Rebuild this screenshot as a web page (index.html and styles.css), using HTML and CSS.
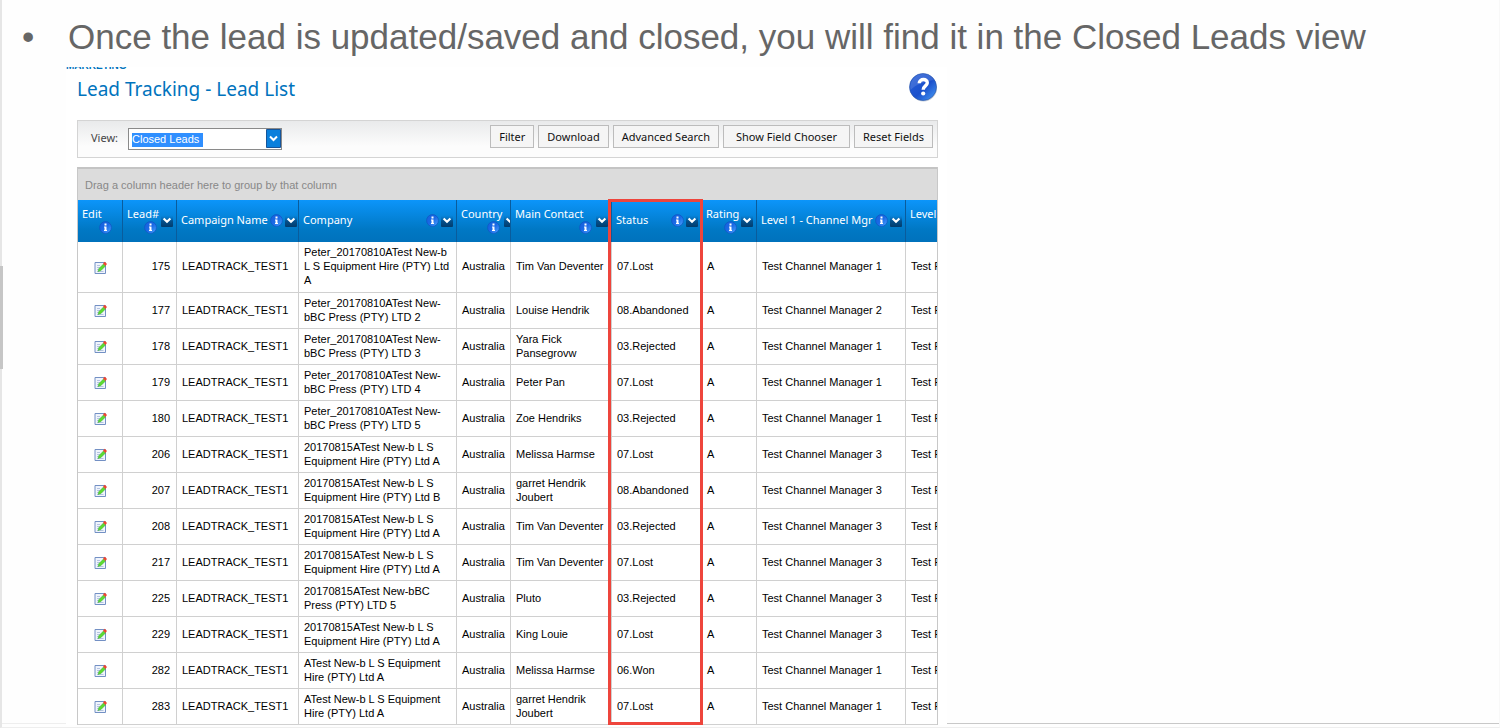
FILE: index.html
```html
<!DOCTYPE html>
<html lang="en">
<head>
    <meta charset="UTF-8">
    <meta name="viewport" content="width=device-width, initial-scale=1.0">
    <title>Lead Tracking - Lead List</title>
    <link rel="stylesheet" href="styles.css">
</head>
<body>
    <!-- shared icons -->
    <svg class="sprite" aria-hidden="true">
        <defs>
            <linearGradient id="infoFill" x1="0" y1="0" x2="1" y2="1">
                <stop offset="0" stop-color="#1560dc"/>
                <stop offset="0.5" stop-color="#1a6ae6"/>
                <stop offset="1" stop-color="#4fa8ff"/>
            </linearGradient>
            <linearGradient id="menuFill" x1="0" y1="0" x2="0" y2="1">
                <stop offset="0" stop-color="#0a78cc" stop-opacity="0"/>
                <stop offset="0.5" stop-color="#04508c"/>
                <stop offset="1" stop-color="#023c6c"/>
            </linearGradient>
            <linearGradient id="helpFill" x1="0" y1="0" x2="1" y2="1">
                <stop offset="0" stop-color="#2a5fd8"/>
                <stop offset="0.55" stop-color="#1a50cc"/>
                <stop offset="1" stop-color="#4aa0f8"/>
            </linearGradient>
        </defs>
        <symbol id="info" viewBox="0 0 13 13">
            <circle cx="6.500" cy="6.500" r="5.900" fill="url(#infoFill)" stroke="#0f58c4" stroke-width=".8"/>
            <path d="M5.500 2.500h2v2h-2zM5 5.500h2.500V9H8v1H5V9h.5V6.500H5z" fill="#fff"/>
        </symbol>
        <symbol id="menu" viewBox="0 0 12 12">
            <rect width="12" height="12" rx="1" fill="url(#menuFill)"/>
            <path d="M2.600 3.500L6 6.700l3.400-3.200" fill="none" stroke="#fff" stroke-width="2.200"/>
        </symbol>
        <symbol id="edit" viewBox="0 0 13 14">
            <path d="M1 1.500h10.500v11H1z" fill="#f0f4fc" stroke="#7390c4"/>
            <path d="M3 4.500h3M3 6.500h3M3 8.500h2M3 10.500h6.500" stroke="#b4c4e0"/>
            <path d="M4 10.500L5 7.500 9.500 3l2 2L7 9.500z" fill="#5cdc30" stroke="#36a82a" stroke-width=".5"/>
            <path d="M9 2.500L10.700.7 13 3l-1.700 2z" fill="#ee4630"/>
        </symbol>
    </svg>

    <main class="slide">
        <ul class="headline">
            <li>Once the lead is updated/saved and closed, you will find it in the Closed Leads view</li>
        </ul>

        <section class="capture">
            <div class="crumb"><span>MARKETING</span></div>
            <header class="title-bar">
                <h1>Lead Tracking - Lead List</h1>
                <a href="#" class="help" aria-label="Help">
                    <svg width="30" height="30" viewBox="0 0 30 30">
                        <circle cx="15.500" cy="16" r="13.500" fill="#c4cbd6"/>
                        <circle cx="15" cy="15" r="13.500" fill="url(#helpFill)" stroke="#2452a8" stroke-width=".6"/>
                        <path d="M2.500 18C1 8 8 2 15 2c6 0 9 3 11 6C18 9 8 12 2.500 18z" fill="#fff" opacity=".13"/>
                        <path d="M11.200 11.300c.2-5 8.300-5 8.100-.4-.1 3-4.100 3-4.100 6.800" fill="none" stroke="#fff" stroke-width="3.400"/>
                        <circle cx="15.200" cy="21.500" r="2.100" fill="#fff"/>
                    </svg>
                </a>
            </header>

            <form class="toolbar">
                <label for="view">View:</label>
                <div class="combo">
                    <select id="view">
                        <option>Closed Leads</option>
                    </select>
                    <svg class="combo-arrow" width="15" height="19" viewBox="0 0 15 19" aria-hidden="true">
                        <path d="M.5.500h14v18H.5z" fill="#0a80dc" stroke="#16559a"/>
                        <path d="M4 7.500l3.500 3.500L11 7.500" fill="none" stroke="#fff" stroke-width="2"/>
                    </svg>
                </div>
                <div class="actions">
                    <button type="button">Filter</button>
                    <button type="button">Download</button>
                    <button type="button">Advanced Search</button>
                    <button type="button" class="wide">Show Field Chooser</button>
                    <button type="button">Reset Fields</button>
                </div>
            </form>

            <div class="grid">
                <div class="group-bar">Drag a column header here to group by that column</div>
                <table>
                    <colgroup>
                        <col class="c-edit"><col class="c-lead"><col class="c-campaign"><col class="c-company"><col class="c-country"><col class="c-contact"><col class="c-status"><col class="c-rating"><col class="c-level"><col class="c-level">
                    </colgroup>
                    <thead>
                        <tr>
                            <th><div class="head"><div class="stacked"><span>Edit</span><svg class="info"><use href="#info"/></svg></div></div></th>
                            <th><div class="head"><div class="stacked"><span>Lead#</span><svg class="info"><use href="#info"/></svg></div><svg class="menu"><use href="#menu"/></svg></div></th>
                            <th><div class="head"><span>Campaign Name</span><svg class="info"><use href="#info"/></svg><svg class="menu"><use href="#menu"/></svg></div></th>
                            <th><div class="head"><span>Company</span><svg class="info"><use href="#info"/></svg><svg class="menu"><use href="#menu"/></svg></div></th>
                            <th><div class="head"><div class="stacked"><span>Country</span><svg class="info"><use href="#info"/></svg></div><svg class="menu"><use href="#menu"/></svg></div></th>
                            <th><div class="head"><div class="stacked"><span>Main Contact</span><svg class="info"><use href="#info"/></svg></div><svg class="menu"><use href="#menu"/></svg></div></th>
                            <th><div class="head"><span>Status</span><svg class="info"><use href="#info"/></svg><svg class="menu"><use href="#menu"/></svg></div></th>
                            <th><div class="head"><div class="stacked"><span>Rating</span><svg class="info"><use href="#info"/></svg></div><svg class="menu"><use href="#menu"/></svg></div></th>
                            <th><div class="head"><span>Level 1 - Channel Mgr</span><svg class="info"><use href="#info"/></svg><svg class="menu"><use href="#menu"/></svg></div></th>
                            <th><div class="head"><div class="stacked"><span>Level</span><svg class="info"><use href="#info"/></svg></div></div></th>
                        </tr>
                    </thead>
                    <tbody>
                        <tr class="tall">
                            <td><a href="#" aria-label="Edit 175"><svg class="edit"><use href="#edit"/></svg></a></td>
                            <td>175</td><td>LEADTRACK_TEST1</td><td>Peter_20170810ATest New-b<br>L S Equipment Hire (PTY) Ltd<br>A</td><td>Australia</td><td>Tim Van Deventer</td><td>07.Lost</td><td>A</td><td>Test Channel Manager 1</td><td>Test F</td>
                        </tr>
                        <tr>
                            <td><a href="#" aria-label="Edit 177"><svg class="edit"><use href="#edit"/></svg></a></td>
                            <td>177</td><td>LEADTRACK_TEST1</td><td>Peter_20170810ATest New-<br>bBC Press (PTY) LTD 2</td><td>Australia</td><td>Louise Hendrik</td><td>08.Abandoned</td><td>A</td><td>Test Channel Manager 2</td><td>Test F</td>
                        </tr>
                        <tr>
                            <td><a href="#" aria-label="Edit 178"><svg class="edit"><use href="#edit"/></svg></a></td>
                            <td>178</td><td>LEADTRACK_TEST1</td><td>Peter_20170810ATest New-<br>bBC Press (PTY) LTD 3</td><td>Australia</td><td>Yara Fick<br>Pansegrovw</td><td>03.Rejected</td><td>A</td><td>Test Channel Manager 1</td><td>Test F</td>
                        </tr>
                        <tr>
                            <td><a href="#" aria-label="Edit 179"><svg class="edit"><use href="#edit"/></svg></a></td>
                            <td>179</td><td>LEADTRACK_TEST1</td><td>Peter_20170810ATest New-<br>bBC Press (PTY) LTD 4</td><td>Australia</td><td>Peter Pan</td><td>07.Lost</td><td>A</td><td>Test Channel Manager 1</td><td>Test F</td>
                        </tr>
                        <tr>
                            <td><a href="#" aria-label="Edit 180"><svg class="edit"><use href="#edit"/></svg></a></td>
                            <td>180</td><td>LEADTRACK_TEST1</td><td>Peter_20170810ATest New-<br>bBC Press (PTY) LTD 5</td><td>Australia</td><td>Zoe Hendriks</td><td>03.Rejected</td><td>A</td><td>Test Channel Manager 1</td><td>Test F</td>
                        </tr>
                        <tr>
                            <td><a href="#" aria-label="Edit 206"><svg class="edit"><use href="#edit"/></svg></a></td>
                            <td>206</td><td>LEADTRACK_TEST1</td><td>20170815ATest New-b L S<br>Equipment Hire (PTY) Ltd A</td><td>Australia</td><td>Melissa Harmse</td><td>07.Lost</td><td>A</td><td>Test Channel Manager 3</td><td>Test F</td>
                        </tr>
                        <tr>
                            <td><a href="#" aria-label="Edit 207"><svg class="edit"><use href="#edit"/></svg></a></td>
                            <td>207</td><td>LEADTRACK_TEST1</td><td>20170815ATest New-b L S<br>Equipment Hire (PTY) Ltd B</td><td>Australia</td><td>garret Hendrik<br>Joubert</td><td>08.Abandoned</td><td>A</td><td>Test Channel Manager 3</td><td>Test F</td>
                        </tr>
                        <tr>
                            <td><a href="#" aria-label="Edit 208"><svg class="edit"><use href="#edit"/></svg></a></td>
                            <td>208</td><td>LEADTRACK_TEST1</td><td>20170815ATest New-b L S<br>Equipment Hire (PTY) Ltd A</td><td>Australia</td><td>Tim Van Deventer</td><td>03.Rejected</td><td>A</td><td>Test Channel Manager 3</td><td>Test F</td>
                        </tr>
                        <tr>
                            <td><a href="#" aria-label="Edit 217"><svg class="edit"><use href="#edit"/></svg></a></td>
                            <td>217</td><td>LEADTRACK_TEST1</td><td>20170815ATest New-b L S<br>Equipment Hire (PTY) Ltd A</td><td>Australia</td><td>Tim Van Deventer</td><td>07.Lost</td><td>A</td><td>Test Channel Manager 3</td><td>Test F</td>
                        </tr>
                        <tr>
                            <td><a href="#" aria-label="Edit 225"><svg class="edit"><use href="#edit"/></svg></a></td>
                            <td>225</td><td>LEADTRACK_TEST1</td><td>20170815ATest New-bBC<br>Press (PTY) LTD 5</td><td>Australia</td><td>Pluto</td><td>03.Rejected</td><td>A</td><td>Test Channel Manager 3</td><td>Test F</td>
                        </tr>
                        <tr>
                            <td><a href="#" aria-label="Edit 229"><svg class="edit"><use href="#edit"/></svg></a></td>
                            <td>229</td><td>LEADTRACK_TEST1</td><td>20170815ATest New-b L S<br>Equipment Hire (PTY) Ltd A</td><td>Australia</td><td>King Louie</td><td>07.Lost</td><td>A</td><td>Test Channel Manager 3</td><td>Test F</td>
                        </tr>
                        <tr>
                            <td><a href="#" aria-label="Edit 282"><svg class="edit"><use href="#edit"/></svg></a></td>
                            <td>282</td><td>LEADTRACK_TEST1</td><td>ATest New-b L S Equipment<br>Hire (PTY) Ltd A</td><td>Australia</td><td>Melissa Harmse</td><td>06.Won</td><td>A</td><td>Test Channel Manager 1</td><td>Test F</td>
                        </tr>
                        <tr>
                            <td><a href="#" aria-label="Edit 283"><svg class="edit"><use href="#edit"/></svg></a></td>
                            <td>283</td><td>LEADTRACK_TEST1</td><td>ATest New-b L S Equipment<br>Hire (PTY) Ltd A</td><td>Australia</td><td>garret Hendrik<br>Joubert</td><td>07.Lost</td><td>A</td><td>Test Channel Manager 1</td><td>Test F</td>
                        </tr>
                    </tbody>
                </table>
                <div class="highlight"></div>
            </div>
        </section>
    </main>
</body>
</html>
```

FILE: styles.css
```css
* {
    margin: 0;
    padding: 0;
    box-sizing: border-box;
}

body {
    background: #fefefe;
    color: #000;
    font-family: "Liberation Sans", Arial, sans-serif;
    font-size: 11px;
}

.sprite {
    position: absolute;
    width: 0;
    height: 0;
}

.slide {
    position: relative;
    min-height: 100vh;
    border-left: 2px solid #e6e6e6;
    border-right: 1px solid #f8f8f8;
    border-bottom: 1px solid #eee;
}

/* scroll thumb on the left edge */
.slide::before {
    content: "";
    position: absolute;
    left: -2px;
    top: 266px;
    width: 3px;
    height: 103px;
    background: #c6c6c6;
}

/* rule along the bottom of the slide */
.slide::after {
    content: "";
    position: absolute;
    left: 0;
    right: 0;
    bottom: 3px;
    height: 1px;
    background: linear-gradient(to right, #eee 64px, #c8c8c8 64px);
}

.headline {
    height: 67px;
    padding: 17px 0 0 20px;
    list-style: none;
    color: #666;
    font-size: 35px;
    line-height: 40px;
}

.headline li {
    display: flex;
    white-space: nowrap;
}

.headline li::before {
    content: "•";
    width: 46px;
}

.capture {
    position: relative;
    z-index: 1;
    max-width: 881px;
    margin-left: 64px;
    padding: 0 9px 0 11px;
    background: #fff;
}

.crumb {
    display: flex;
    align-items: flex-end;
    height: 3px;
    margin-left: -11px;
    overflow: hidden;
    color: #0073bd;
    font-size: 10px;
    font-weight: bold;
    line-height: 8px;
}

.title-bar {
    display: flex;
    justify-content: space-between;
    height: 50px;
}

h1 {
    padding-top: 6px;
    color: #0073bd;
    font-family: "Noto Sans", Tahoma, sans-serif;
    font-size: 19px;
    font-weight: normal;
    line-height: 26px;
}

.help svg {
    display: block;
    margin-top: 2px;
}

.toolbar {
    display: flex;
    align-items: flex-start;
    height: 38px;
    padding: 4px 4px 0 13px;
    border: 1px solid #d4d4d4;
    background: linear-gradient(#e9eaeb, #fcfcfc 70%);
    font-family: "Noto Sans", Tahoma, sans-serif;
}

.toolbar label {
    width: 37px;
    color: #444;
    line-height: 26px;
}

.combo {
    position: relative;
    width: 154px;
    margin-top: 3px;
}

.combo select {
    display: block;
    width: 100%;
    height: 22px;
    padding-left: 3px;
    appearance: none;
    border: 1px solid #8a8a8a;
    border-radius: 0;
    /* selected text */
    background: linear-gradient(#2f8fff, #2f8fff) 3px 4px / 71px 14px no-repeat #fff;
    color: #fff;
    font-family: "Liberation Sans", Arial, sans-serif;
    font-size: 11px;
}

.combo-arrow {
    position: absolute;
    top: 1px;
    right: 1px;
    pointer-events: none;
}

.actions {
    display: flex;
    gap: 4px;
    margin-left: auto;
}

.actions button {
    height: 23px;
    padding: 0 8px;
    border: 1px solid #bcbcbc;
    background: #f5f5f5;
    color: #111;
    font-family: "Noto Sans", Tahoma, sans-serif;
    font-size: 11px;
}

.actions .wide {
    padding: 0 12px;
}

.grid {
    position: relative;
    margin-top: 9px;
    border-right: 1px solid #c8c8c8;
    overflow: hidden;
}

.group-bar {
    height: 33px;
    padding-left: 7px;
    border-top: 2px solid #c4c4c4;
    border-left: 1px solid #c8c8c8;
    background: #dcdcdc;
    color: #888;
    line-height: 32px;
}

table {
    width: 977px;
    table-layout: fixed;
    border-collapse: separate;
    border-spacing: 0;
    border-left: 1px solid #c8c8c8;
}

.c-edit { width: 45px; }
.c-lead { width: 54px; }
.c-campaign { width: 122px; }
.c-company { width: 158px; }
.c-country { width: 54px; }
.c-contact { width: 101px; }
.c-status { width: 90px; }
.c-rating { width: 55px; }
.c-level { width: 149px; }

th {
    height: 42px;
    border-right: 1px solid #0a5c9c;
    background: linear-gradient(#0c95fa, #0078c4 70%, #0072bc);
    color: #fff;
    font-family: "Noto Sans", Tahoma, sans-serif;
    font-size: 11px;
    font-weight: normal;
    text-align: left;
    white-space: nowrap;
    overflow: hidden;
}

.head {
    display: flex;
    align-items: center;
    gap: 2px;
    padding: 0 3px 2px 4px;
    line-height: 14px;
}

.head > span {
    flex: 1;
}

.stacked {
    display: flex;
    flex: 1;
    flex-direction: column;
    align-items: flex-start;
}

.stacked .info {
    align-self: flex-end;
    margin-right: 2px;
}

.stacked:last-child .info {
    margin-right: 7px;
}

.info,
.menu {
    flex: none;
    display: block;
    width: 12px;
    height: 12px;
}

.info {
    width: 13px;
    height: 13px;
}

.menu {
    margin-top: 2px;
}

td {
    height: 36px;
    padding: 0 0 2px 5px;
    border-right: 1px solid #d0d0d0;
    border-bottom: 1px solid #d0d0d0;
    background: #fff;
    line-height: 14px;
    vertical-align: middle;
    white-space: nowrap;
    overflow: hidden;
}

.tall td {
    height: 51px;
}

td:nth-child(2) {
    padding-right: 6px;
    text-align: right;
}

.edit {
    display: block;
    width: 13px;
    height: 14px;
    margin: 3px auto 0 11px;
}

/* marks the status column */
.highlight {
    position: absolute;
    top: 32px;
    bottom: 0;
    left: 531px;
    width: 95px;
    border: 3px solid #ee453c;
}
```
